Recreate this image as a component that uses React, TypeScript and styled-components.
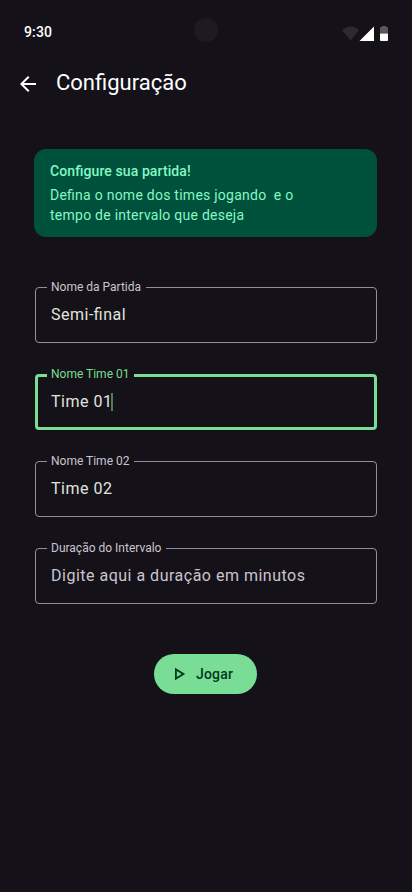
import React from "react";
import styled, { createGlobalStyle } from "styled-components";

const GlobalStyle = createGlobalStyle`
  *, *::before, *::after { box-sizing: border-box; }
  body {
    margin: 0;
    background: #141218;
    font-family: Roboto, sans-serif;
    font-feature-settings: "liga" 1;
  }
`;

const Screen = styled.main`
  width: 412px;
  height: 892px;
  display: flex;
  flex-direction: column;
  background: #141218;
  overflow: hidden;
`;

const StatusBar = styled.div`
  height: 52px;
  padding: 18px 24px 0;
  display: grid;
  grid-template-columns: 1fr 24px 1fr;
  align-items: start;
`;

const Clock = styled.span`
  padding-top: 4px;
  color: #fff;
  font-size: 14px;
  font-weight: 500;
  line-height: 20px;
  letter-spacing: 0.14px;
`;

const Camera = styled.span`
  width: 24px;
  height: 24px;
  border-radius: 50%;
  background: #1d1b20;
`;

const StatusIcons = styled.svg`
  justify-self: end;
  margin-top: 8px;
  width: 46px;
  height: 16px;
`;

const TopBar = styled.header`
  height: 64px;
  padding: 0 16px;
  display: flex;
  align-items: center;
  gap: 16px;
`;

const BackButton = styled.button`
  width: 24px;
  height: 24px;
  padding: 0;
  border: 0;
  background: none;
  color: #fff;
`;

const Title = styled.h1`
  margin: -2px 0 0;
  color: #fff;
  font-size: 22px;
  font-weight: 400;
  line-height: 28px;
`;

const InfoCard = styled.section`
  width: 343px;
  height: 88px;
  margin: 33px 0 0 34px;
  padding: 12px 16px;
  border-radius: 12px;
  background: #00513b;
  color: #84f8c5;
  font-size: 14px;
  line-height: 20px;
`;

const CardTitle = styled.h2`
  margin: 0 0 4px;
  font-size: 14px;
  font-weight: 500;
  line-height: 20px;
  letter-spacing: 0.1px;
`;

const CardText = styled.p`
  margin: 0;
  letter-spacing: 0.25px;
`;

const Form = styled.form`
  display: flex;
  flex-direction: column;
  gap: 31px;
  margin: 50px 35px 0;
`;

const Field = styled.label<{ $active?: boolean }>`
  position: relative;
  display: flex;
  align-items: center;
  height: 56px;
  padding: 0 ${(p) => (p.$active ? 13 : 15)}px;
  border: ${(p) => (p.$active ? "3px solid #79dd96" : "1px solid #938f99")};
  border-radius: 4px;
`;

const FieldLabel = styled.span<{ $active?: boolean }>`
  position: absolute;
  top: ${(p) => (p.$active ? -11 : -9)}px;
  left: ${(p) => (p.$active ? 9 : 11)}px;
  padding: 0 5px 0 4px;
  background: #141218;
  color: ${(p) => (p.$active ? "#79dd96" : "#cac4d0")};
  font-size: 12px;
  line-height: 16px;
  white-space: nowrap;
`;

const Value = styled.span<{ $placeholder?: boolean }>`
  color: ${(p) => (p.$placeholder ? "#cac4d0" : "#e1e3de")};
  font-size: 16px;
  line-height: 24px;
  letter-spacing: 0.5px;
`;

const Caret = styled.span`
  width: 2px;
  height: 18px;
  margin-left: -1px;
  background: #478059;
`;

const PlayButton = styled.button`
  align-self: center;
  width: 103px;
  height: 40px;
  margin: 50px 1px 0 0;
  padding: 0 22px 0 16px;
  display: flex;
  align-items: center;
  gap: 8px;
  border: 0;
  border-radius: 20px;
  background: #79dd96;
  color: #00391c;
  font: 500 14px/20px Roboto, sans-serif;
  letter-spacing: 0.2px;
`;

const fields = [
  { label: "Nome da Partida", value: "Semi-final" },
  { label: "Nome Time 01", value: "Time 01", active: true },
  { label: "Nome Time 02", value: "Time 02" },
  { label: "Duração do Intervalo", value: "Digite aqui a duração em minutos", placeholder: true },
];

export default function App() {
  return (
    <>
      <GlobalStyle />
      <Screen>
        <StatusBar>
          <Clock>9:30</Clock>
          <Camera />
          <StatusIcons viewBox="0 0 46 16" fill="#fff">
            <path d="M0 4.2C4.6-.9 12.4-.9 17 4.2L8.5 14.5Z" fillOpacity=".1" />
            <path d="M17.5 15L32 .5V15Z" />
            <path d="M40 0h4v1h1a1 1 0 0 1 1 1v5.500h-8V2a1 1 0 0 1 1-1h1Z" fillOpacity=".3" />
            <path d="M38 7.500h8V14a1 1 0 0 1-1 1h-6a1 1 0 0 1-1-1Z" />
          </StatusIcons>
        </StatusBar>
        <TopBar>
          <BackButton aria-label="Voltar">
            <svg width="24" height="24" viewBox="0 0 24 24" fill="currentColor">
              <path d="M20 11H7.83l5.59-5.59L12 4l-8 8 8 8 1.41-1.41L7.83 13H20v-2z" />
            </svg>
          </BackButton>
          <Title>Configuração</Title>
        </TopBar>
        <InfoCard>
          <CardTitle>Configure sua partida!</CardTitle>
          <CardText>
            Defina o nome dos times jogando &nbsp;e o<br />
            tempo de intervalo que deseja
          </CardText>
        </InfoCard>
        <Form>
          {fields.map((f) => (
            <Field key={f.label} $active={f.active}>
              <FieldLabel $active={f.active}>{f.label}</FieldLabel>
              <Value $placeholder={f.placeholder}>{f.value}</Value>
              {f.active && <Caret />}
            </Field>
          ))}
        </Form>
        <PlayButton>
          <svg width="18" height="18" viewBox="0 0 18 18" fill="currentColor">
            <path fillRule="evenodd" d="M5 2.800V15.200L15.200 9ZM6.800 6L11.700 9L6.800 12Z" />
          </svg>
          Jogar
        </PlayButton>
      </Screen>
    </>
  );
}
